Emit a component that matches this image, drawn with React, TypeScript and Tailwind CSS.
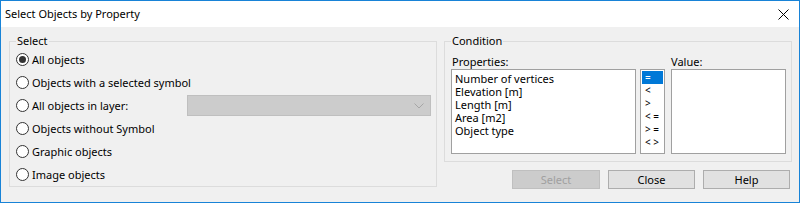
const FONT = { fontFamily: '"Noto Sans", "Open Sans", sans-serif' };

const Radio = ({ checked, label }: { checked?: boolean; label: string }) => (
  <div className="flex items-center h-[23px]">
    <span className="w-[13px] h-[13px] rounded-full border border-[#333333] bg-white flex items-center justify-center shrink-0">
      {checked && <span className="w-[7px] h-[7px] rounded-full bg-[#333333]" />}
    </span>
    <span className="ml-[3px] text-[11px] leading-[14px] text-black whitespace-nowrap">{label}</span>
  </div>
);

const properties = ['Number of vertices', 'Elevation [m]', 'Length [m]', 'Area [m2]', 'Object type'];
const operators = ['=', '<', '>', '< =', '> =', '< >'];

export default function App() {
  return (
    <div className="w-[800px] h-[204px] bg-white" style={FONT}>
      <div className="w-[800px] h-[203px] border border-[#1883d7] flex flex-col">
        {/* title bar */}
        <div className="h-[26px] bg-white flex items-center pl-[4px] pr-[10px] shrink-0">
          <span className="text-[11px] text-black">Select Objects by Property</span>
          <svg className="ml-auto" width="11" height="11" viewBox="0 0 11 11" fill="none">
            <path d="M0.5 0.5 L10.5 10.5 M10.5 0.5 L0.5 10.5" stroke="#000" strokeWidth="1" />
          </svg>
        </div>

        <div className="flex-1 bg-[#f0f0f0] flex pl-[8px] pt-[7px] gap-[7px]">
          {/* Select group */}
          <fieldset className="w-[428px] h-[153px] border border-[#dcdcdc]">
            <legend className="ml-[6px] px-[1px] text-[11px] leading-[14px] text-black">Select</legend>
            <div className="pl-[6px] pr-[5px]">
              <Radio checked label="All objects" />
              <Radio label="Objects with a selected symbol" />
              <div className="flex items-center">
                <Radio label="All objects in layer:" />
                <div className="ml-auto w-[244px] h-[21px] bg-[#cccccc] border border-[#bfbfbf] flex items-center justify-end pr-[6px]">
                  <svg width="10" height="6" viewBox="0 0 10 6" fill="none">
                    <path d="M0.5 0.5 L5 5 L9.5 0.5" stroke="#a6a6a6" strokeWidth="1" />
                  </svg>
                </div>
              </div>
              <Radio label="Objects without Symbol" />
              <Radio label="Graphic objects" />
              <Radio label="Image objects" />
            </div>
          </fieldset>

          {/* Condition group + buttons */}
          <div className="w-[348px] flex flex-col">
            <fieldset className="h-[128px] border border-[#dcdcdc]">
              <legend className="ml-[6px] px-[1px] text-[11px] leading-[14px] text-black">Condition</legend>
              <div className="pl-[6px] pr-[5px]">
                <div className="flex mt-[7px] h-[13px] items-end">
                  <span className="w-[220px] text-[11px] leading-[13px] text-black pl-[1px]">Properties:</span>
                  <span className="text-[11px] leading-[13px] text-black">Value:</span>
                </div>
                <div className="flex mt-[1px]">
                  <div className="w-[185px] h-[85px] bg-white border border-[#a0a0a0] pt-[2px] pl-[3px]">
                    {properties.map((p) => (
                      <div key={p} className="h-[13px] text-[11px] leading-[13px] text-black whitespace-nowrap">{p}</div>
                    ))}
                  </div>
                  <div className="ml-[4px] w-[25px] h-[85px] bg-white border border-[#a0a0a0] p-[1px]">
                    {operators.map((o, i) => (
                      <div
                        key={o}
                        className={`h-[13px] text-[10px] leading-[13px] pl-[3px] whitespace-nowrap ${i === 0 ? 'bg-[#0078d7] text-white' : 'text-black'}`}
                      >
                        {o}
                      </div>
                    ))}
                  </div>
                  <div className="ml-[6px] w-[115px] h-[85px] bg-white border border-[#a0a0a0]" />
                </div>
              </div>
            </fieldset>

            <div className="flex justify-end gap-[8px] mt-[8px] pr-[2px]">
              <button className="w-[88px] h-[19px] bg-[#cccccc] border border-[#bfbfbf] text-[11px] leading-[17px] text-[#a0a0a0]">Select</button>
              <button className="w-[87px] h-[19px] bg-[#e1e1e1] border border-[#adadad] text-[11px] leading-[17px] text-black">Close</button>
              <button className="w-[87px] h-[19px] bg-[#e1e1e1] border border-[#adadad] text-[11px] leading-[17px] text-black">Help</button>
            </div>
          </div>
        </div>
      </div>
    </div>
  );
}
